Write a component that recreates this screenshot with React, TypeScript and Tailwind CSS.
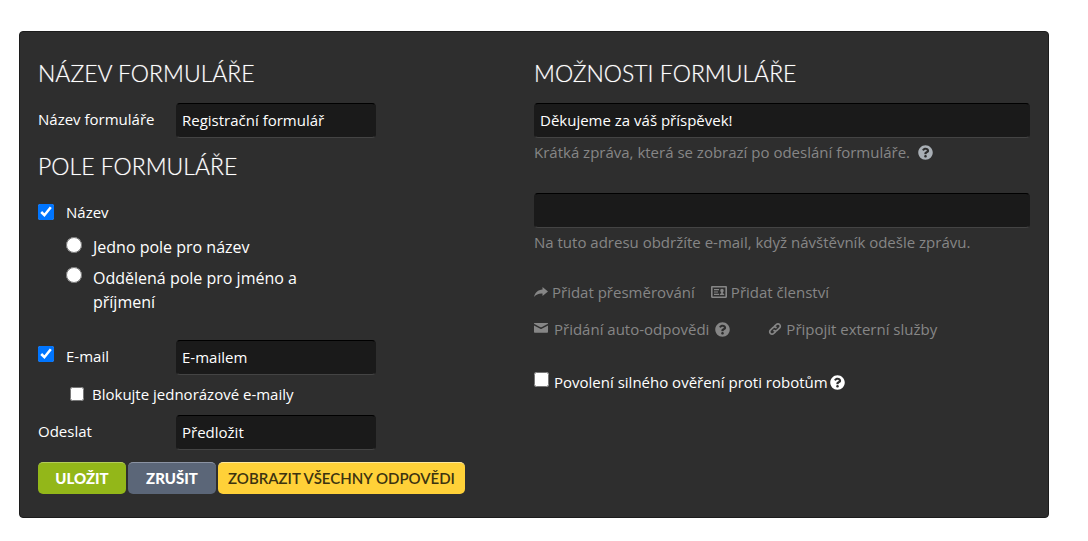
import type { ReactNode } from 'react';
import { FaQuestionCircle } from 'react-icons/fa';

const field =
  'h-[35px] rounded border border-[#1a1a1a] border-t-black border-b-[#444444] bg-[#1a1a1a] px-[5px] pb-0.5 text-[15px] text-white outline-none';

function Heading({ children }: { children: ReactNode }) {
  return (
    <h2 className="font-['Lato',sans-serif] text-[23px] leading-[34px] font-light whitespace-nowrap text-white uppercase [text-shadow:0_0_1px_#ffffff80]">
      {children}
    </h2>
  );
}

function ShareIcon() {
  return (
    <svg viewBox="0 0 14 10" className="h-[10px] w-[14px] shrink-0" fill="currentColor" aria-hidden="true">
      <path d="M8.5 0 14 4.500 8.500 9V6.500C4.500 6.300 2 7.500 0 10 1 5.500 4 2.800 8.500 2.500Z" />
    </svg>
  );
}

function CardIcon() {
  return (
    <svg viewBox="0 0 16 12" className="h-3 w-4 shrink-0" fill="currentColor" aria-hidden="true">
      <path
        fillRule="evenodd"
        d="M1.200 0h13.600C15.500 0 16 .5 16 1.200v9.600c0 .7-.5 1.200-1.200 1.200H1.200C.5 12 0 11.500 0 10.800V1.200C0 .5.5 0 1.200 0Zm.4 1.600v8.800h12.800v-8.800Z"
      />
      <path d="M3 3h5v1.300H3ZM3 5.400h4v1.200H3ZM3 7.700h5V9H3Z" />
      <path d="M11 2.800c1 0 1.700.7 1.700 1.700 0 .9-.4 1.700-.9 2.100v.6l1.400.7V9H8.800V7.900l1.400-.7v-.6c-.5-.4-.9-1.200-.9-2.100 0-1 .7-1.700 1.700-1.700Z" />
    </svg>
  );
}

function MailIcon() {
  return (
    <svg viewBox="0 0 14 10" className="mb-0.5 h-[10px] w-[14px] shrink-0" fill="currentColor" aria-hidden="true">
      <path d="M.4 0h13.200c.5 0 .5.700 0 1L7.600 4.200a1.300 1.300 0 0 1-1.200 0L.4 1C-.1.700-.1 0 .4 0Z" />
      <path d="M0 2.500 6.300 5.800a1.500 1.500 0 0 0 1.400 0L14 2.500V8.700c0 .6-.4 1-1 1H1c-.6 0-1-.4-1-1Z" />
    </svg>
  );
}

function LinkIcon() {
  return (
    <svg
      viewBox="0 0 14 14"
      className="h-[14px] w-[14px] shrink-0"
      fill="none"
      stroke="currentColor"
      strokeWidth="1.700"
      strokeLinecap="round"
      aria-hidden="true"
    >
      <path d="M6.600 4.200 8.300 2.500a2.300 2.300 0 0 1 3.300 0 2.300 2.300 0 0 1 0 3.300L9 8.300a2.300 2.300 0 0 1-3 .2" />
      <path d="M7.400 9.800 5.700 11.500a2.300 2.300 0 0 1-3.300 0 2.300 2.300 0 0 1 0-3.300L5 5.700a2.300 2.300 0 0 1 3-.2" />
    </svg>
  );
}

function OptionLink({ icon, children }: { icon: ReactNode; children: ReactNode }) {
  return (
    <a href="#" className="flex items-center gap-1 whitespace-nowrap">
      {icon}
      {children}
    </a>
  );
}

function FormFields() {
  return (
    <div className="flex flex-col">
      <Heading>Název formuláře</Heading>
      <div className="mt-[13px] flex items-center">
        <label htmlFor="form-name" className="w-[138px] pb-0.5">
          Název formuláře
        </label>
        <input id="form-name" className={`${field} w-[200px]`} defaultValue="Registrační formulář" />
      </div>

      <div className="mt-[11px]">
        <Heading>Pole formuláře</Heading>
      </div>
      <label className="mt-[17px] flex items-start gap-3 leading-6">
        <input type="checkbox" defaultChecked className="mt-1 size-4" />
        Název
      </label>
      <div className="mt-[11px] ml-7 flex max-w-[270px] flex-col gap-[7px] text-base leading-6">
        <label className="flex items-start gap-[11px]">
          <input type="radio" name="name-fields" className="mt-0.5 size-4 shrink-0" />
          Jedno pole pro název
        </label>
        <label className="flex items-start gap-[11px]">
          <input type="radio" name="name-fields" className="mt-px size-4 shrink-0" />
          Oddělená pole pro jméno a příjmení
        </label>
      </div>

      <div className="mt-[26px] flex items-center">
        <label className="flex w-[138px] items-start gap-3 pb-1 leading-6">
          <input type="checkbox" defaultChecked className="mt-0.5 size-4" />
          E-mail
        </label>
        <input aria-label="E-mail" className={`${field} w-[200px]`} defaultValue="E-mailem" />
      </div>
      <label className="mt-[7px] ml-8 flex items-center gap-2 leading-6">
        <input type="checkbox" className="size-[14px]" />
        Blokujte jednorázové e-maily
      </label>
      <div className="mt-[9px] flex items-center">
        <label htmlFor="submit-text" className="w-[138px] pb-0.5">
          Odeslat
        </label>
        <input id="submit-text" className={`${field} w-[200px]`} defaultValue="Předložit" />
      </div>

      <div className="mt-3 flex gap-0.5 font-['Lato',sans-serif] text-[15px] whitespace-nowrap">
        <button className="h-8 w-[88px] rounded-[5px] border-t border-[#b4cd59] bg-[#93b719] font-black text-white uppercase">
          Uložit
        </button>
        <button className="h-8 w-[88px] rounded-[5px] border-t border-[#8b93a3] bg-[#5b6678] font-black text-white uppercase">
          Zrušit
        </button>
        <button className="h-8 w-[247px] rounded-[5px] border-t border-[#ffe79a] bg-[#ffd138] font-semibold text-[#3c3310] uppercase">
          Zobrazit všechny odpovědi
        </button>
      </div>
    </div>
  );
}

function FormOptions() {
  return (
    <div className="flex flex-col text-[#868686]">
      <Heading>Možnosti formuláře</Heading>
      <input aria-label="Zpráva" className={`${field} mt-[13px] w-full`} defaultValue="Děkujeme za váš příspěvek!" />
      <p className="mt-0.5 flex items-center gap-2 leading-6">
        Krátká zpráva, která se zobrazí po odeslání formuláře.
        <FaQuestionCircle size={15} className="text-[#a9afb5]" />
      </p>
      <input type="email" aria-label="E-mailová adresa" className={`${field} mt-[29px] w-full`} />
      <p className="mt-0.5 leading-6">Na tuto adresu obdržíte e-mail, když návštěvník odešle zprávu.</p>

      <div className="mt-[26px] flex gap-4 leading-6">
        <OptionLink icon={<ShareIcon />}>Přidat přesměrování</OptionLink>
        <OptionLink icon={<CardIcon />}>Přidat členství</OptionLink>
      </div>
      <div className="mt-[13px] flex gap-[38px] leading-6">
        <OptionLink icon={<MailIcon />}>
          <span className="mx-0.5">Přidání auto-odpovědi</span>
          <FaQuestionCircle size={15} />
        </OptionLink>
        <OptionLink icon={<LinkIcon />}>Připojit externí služby</OptionLink>
      </div>

      <label className="mt-[29px] flex items-start gap-[5px] leading-6 text-white">
        <input type="checkbox" className="mt-0.5 size-[15px]" />
        <span className="flex items-center gap-0.5">
          Povolení silného ověření proti robotům
          <FaQuestionCircle size={15} />
        </span>
      </label>
    </div>
  );
}

export default function App() {
  return (
    <main className="pt-[31px] pr-[39px] pl-[19px] font-['Open_Sans',sans-serif] text-[15px] text-white">
      <form className="grid grid-cols-2 rounded border border-[#1c1c1c] bg-[#2e2e2e] px-[18px] pt-6 pb-[23px]">
        <FormFields />
        <FormOptions />
      </form>
    </main>
  );
}
